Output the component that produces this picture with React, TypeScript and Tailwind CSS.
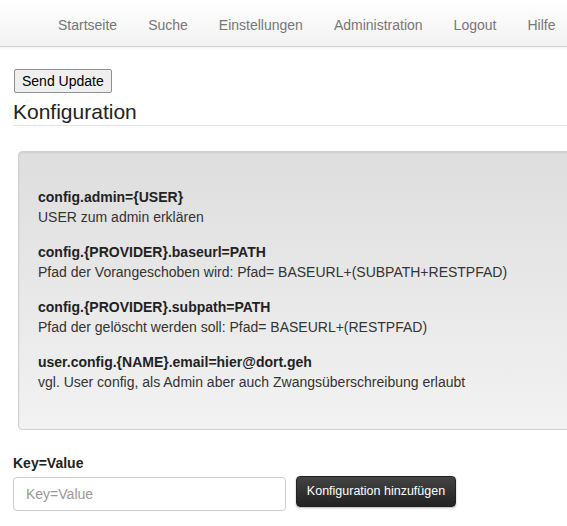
import React from 'react';

const NAV = ['Startseite', 'Suche', 'Einstellungen', 'Administration', 'Logout', 'Hilfe'];

const ENTRIES = [
  { key: 'config.admin={USER}', text: 'USER zum admin erklären' },
  { key: 'config.{PROVIDER}.baseurl=PATH', text: 'Pfad der Vorangeschoben wird: Pfad= BASEURL+(SUBPATH+RESTPFAD)' },
  { key: 'config.{PROVIDER}.subpath=PATH', text: 'Pfad der gelöscht werden soll: Pfad= BASEURL+(RESTPFAD)' },
  { key: 'user.config.{NAME}.email=hier@dort.geh', text: 'vgl. User config, als Admin aber auch Zwangsüberschreibung erlaubt' },
];

export default function App() {
  return (
    <div className="w-full min-h-[526px] overflow-hidden bg-white text-[#333] font-['Liberation_Sans',Arial,sans-serif] text-[14px]">
      {/* top navbar */}
      <nav className="h-[47px] border-b border-[#d4d4d4] bg-gradient-to-b from-white to-[#f2f2f2] shadow-[0_1px_4px_rgba(0,0,0,0.065)] flex items-center pl-[58px] pt-[4px] gap-[31px] whitespace-nowrap">
        {NAV.map((n) => (
          <a key={n} className="text-[#777] leading-[20px] cursor-pointer">{n}</a>
        ))}
      </nav>

      <main className="pl-[13px]">
        <button className="mt-[22px] ml-px h-[24px] px-[7px] bg-[#efefef] border border-[#8f8f8f] rounded-[2px] text-[14px] text-black leading-[20px]">
          Send Update
        </button>

        <h3 className="mt-[7px] text-[21px] leading-[24px] text-[#222] border-b border-[#e5e5e5] pb-px">Konfiguration</h3>

        <div className="mt-[25px] ml-[5px] mr-[-40px] border border-[#d0d0d0] rounded-[4px] bg-gradient-to-b from-[#dedede] to-[#f2f2f2] shadow-[inset_0_1px_2px_rgba(0,0,0,0.08)] pt-[35px] pb-[37px] pl-[19px] whitespace-nowrap">
          {ENTRIES.map((e, i) => (
            <div key={e.key} className={i < ENTRIES.length - 1 ? 'mb-[15px]' : ''}>
              <div className="font-bold leading-[20px] text-[#222]">{e.key}</div>
              <div className="leading-[20px]">{e.text}</div>
            </div>
          ))}
        </div>

        <label className="block mt-[23px] font-bold leading-[20px] text-[#222]">Key=Value</label>
        <div className="mt-[4px] flex items-start">
          <input
            placeholder="Key=Value"
            className="w-[273px] h-[34px] border border-[#ccc] rounded-[4px] px-[12px] text-[14px] placeholder:text-[#999] outline-none"
          />
          <button className="ml-[10px] -mt-px w-[160px] h-[31px] rounded-[4px] bg-gradient-to-b from-[#444] to-[#222] border border-[#222] text-white text-[12.5px] shadow-[0_1px_2px_rgba(0,0,0,0.3)]">
            Konfiguration hinzufügen
          </button>
        </div>
      </main>
    </div>
  );
}
